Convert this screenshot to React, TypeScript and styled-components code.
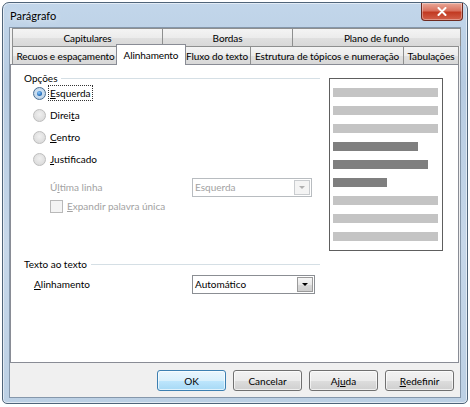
import React from "react";
import styled, { createGlobalStyle } from "styled-components";

const Global = createGlobalStyle`
  html, body { margin: 0; padding: 0; background: #ffffff; }
  body { font-family: Lato, "Open Sans", Arial, sans-serif; font-size: 10px; color: #000; }
  * { box-sizing: border-box; }
`;

const Win = styled.div`
  margin: 2px 0 0 2px;
  width: 466px;
  height: 402px;
  border: 1px solid #4f6479;
  border-radius: 7px 7px 5px 5px;
  background: linear-gradient(180deg, #c2d6ea 0%, #b7cce2 20%, #c6d7e9 60%, #bcd0e4 100%);
  box-shadow: inset 0 0 0 1px rgba(255, 255, 255, 0.55);
  padding: 0 6px 5px 6px;
  display: flex;
  flex-direction: column;
`;

const TitleBar = styled.div`
  height: 24px;
  display: flex;
  align-items: flex-start;
`;

const Title = styled.span`
  margin: 6px 0 0 1px;
  font-size: 11px;
  line-height: 14px;
  color: #000;
  text-shadow: 0 0 6px rgba(255, 255, 255, 0.9);
`;

const CloseBtn = styled.div`
  margin-left: auto;
  margin-right: -2px;
  width: 42px;
  height: 18px;
  border: 1px solid #6f2a20;
  border-top: none;
  border-radius: 0 0 4px 4px;
  background: linear-gradient(180deg, #e9a898 0%, #d9715e 45%, #c23a22 55%, #d2604a 100%);
  box-shadow: inset 0 0 0 1px rgba(255, 255, 255, 0.35);
  display: flex;
  align-items: center;
  justify-content: center;
`;

const Client = styled.div`
  flex: 1;
  background: #f0f0f0;
  border: 1px solid #8597ab;
  display: flex;
  flex-direction: column;
  padding: 0 1px 0 0;
`;

const TabRow = styled.div`
  display: flex;
  height: 18px;
  padding-left: 2px;
  position: relative;
`;

const Tab = styled.div<{ $w: number }>`
  width: ${(p) => p.$w}px;
  flex: none;
  border: 1px solid #8e8f8f;
  border-bottom: none;
  margin-left: -1px;
  background: linear-gradient(180deg, #f4f4f4 0%, #ececec 50%, #e0e0e0 51%, #d8d8d8 100%);
  display: flex;
  align-items: center;
  justify-content: center;
  white-space: nowrap;
  overflow: hidden;
  font-size: 10px;
  letter-spacing: -0.1px;
  line-height: 14px;
  color: #000;
  &:first-child { margin-left: 0; }
`;

const ActiveTab = styled(Tab)`
  background: #ffffff;
  position: relative;
  z-index: 2;
  margin: -2px -2px -1px -3px;
  width: ${(p) => p.$w + 4}px;
  border-color: #898c95;
  padding-bottom: 1px;
`;

const Panel = styled.div`
  height: 299px;
  background: #ffffff;
  border: 1px solid #898c95;
  position: relative;
  z-index: 1;
  padding: 5px 0 0 13px;
`;

const Top = styled.div`
  display: flex;
`;

const Options = styled.div`
  width: 296px;
  display: flex;
  flex-direction: column;
`;

const GroupHead = styled.div`
  display: flex;
  align-items: center;
  height: 16px;
  gap: 4px;
  color: #000;
  &::after {
    content: "";
    flex: 1;
    height: 1px;
    background: #d5dfe5;
    box-shadow: 0 1px 0 #ffffff;
  }
`;

const RadioList = styled.div`
  margin-top: -4px;
  display: flex;
  flex-direction: column;
`;

const RadioRow = styled.div`
  height: 22px;
  display: flex;
  align-items: center;
  padding-left: 9px;
  gap: 3px;
`;

const Radio = styled.span<{ $on?: boolean }>`
  width: 13px;
  height: 13px;
  border-radius: 50%;
  border: 1px solid ${(p) => (p.$on ? "#4a6f93" : "#bdbdbd")};
  background: ${(p) =>
    p.$on
      ? "radial-gradient(circle at 50% 45%, #d8e9f7 0%, #c5d9ec 60%, #a8bdd2 100%)"
      : "radial-gradient(circle at 50% 40%, #f0f0f0 0%, #dddddd 70%, #d2d2d2 100%)"};
  display: flex;
  align-items: center;
  justify-content: center;
  flex: none;
  &::after {
    content: "";
    display: ${(p) => (p.$on ? "block" : "none")};
    width: 5px;
    height: 5px;
    border-radius: 50%;
    background: radial-gradient(circle at 40% 35%, #8ecbff 0%, #2a74c0 60%, #1b4f8a 100%);
  }
`;

const Label = styled.span<{ $focus?: boolean; $disabled?: boolean }>`
  color: ${(p) => (p.$disabled ? "#a2a2a2" : "#000")};
  line-height: 14px;
  padding: 0 1px;
  outline: ${(p) => (p.$focus ? "1px dotted #333" : "none")};
  white-space: nowrap;
`;

const U = styled.span`
  text-decoration: underline;
`;

const FieldRow = styled.div<{ $indent: number; $labelW: number; $top: number }>`
  height: 20px;
  margin-top: ${(p) => p.$top}px;
  display: flex;
  align-items: center;
  padding-left: ${(p) => p.$indent}px;
  & > span:first-child { width: ${(p) => p.$labelW}px; flex: none; }
`;

const Select = styled.div<{ $w: number; $disabled?: boolean }>`
  width: ${(p) => p.$w}px;
  height: 19px;
  border: 1px solid ${(p) => (p.$disabled ? "#b8bcc0" : "#8b8e93")};
  background: #ffffff;
  display: flex;
  align-items: center;
  padding: 1px 1px 1px 2px;
  color: ${(p) => (p.$disabled ? "#a2a2a2" : "#000")};
  line-height: 14px;
`;

const SelectText = styled.span`
  flex: 1;
  white-space: nowrap;
`;

const Arrow = styled.span<{ $disabled?: boolean }>`
  width: 16px;
  height: 15px;
  border: 1px solid ${(p) => (p.$disabled ? "#c9cccf" : "#9a9a9a")};
  background: ${(p) =>
    p.$disabled ? "#f4f4f4" : "linear-gradient(180deg, #f6f6f6 0%, #e8e8e8 50%, #d9d9d9 51%, #cfcfcf 100%)"};
  display: flex;
  align-items: center;
  justify-content: center;
  &::after {
    content: "";
    border-left: 3px solid transparent;
    border-right: 3px solid transparent;
    border-top: 3px solid ${(p) => (p.$disabled ? "#b0b0b0" : "#000")};
  }
`;

const CheckRow = styled.div`
  height: 18px;
  display: flex;
  align-items: center;
  padding-left: 26px;
  gap: 3px;
`;

const Check = styled.span`
  width: 13px;
  height: 13px;
  border: 1px solid #b9b9b9;
  background: #f4f4f4;
  flex: none;
`;

const Preview = styled.div`
  margin: 8px 0 0 9px;
  width: 114px;
  height: 173px;
  border: 1px solid #5e5e5e;
  background: #ffffff;
  padding: 9px 4px 9px 3px;
  display: flex;
  flex-direction: column;
  gap: 9px;
`;

const Bar = styled.div<{ $dark?: boolean }>`
  height: 9px;
  background: ${(p) => (p.$dark ? "#7f7f7f" : "#c4c4c4")};
`;

const Group2 = styled.div`
  width: 296px;
  margin-top: 5px;
  display: flex;
  flex-direction: column;
`;

const Buttons = styled.div`
  display: flex;
  justify-content: flex-end;
  gap: 7px;
  padding: 7px 5px 0 0;
`;

const Button = styled.div<{ $default?: boolean }>`
  width: 69px;
  height: 21px;
  border: 1px solid ${(p) => (p.$default ? "#3c7fb1" : "#707070")};
  border-radius: 3px;
  background: ${(p) =>
    p.$default
      ? "linear-gradient(180deg, #eaf6fd 0%, #d9f0fc 50%, #bee6fd 51%, #a7d9f5 100%)"
      : "linear-gradient(180deg, #f2f2f2 0%, #ebebeb 50%, #dddddd 51%, #cfcfcf 100%)"};
  box-shadow: inset 0 0 0 1px rgba(255, 255, 255, 0.65);
  display: flex;
  align-items: center;
  justify-content: center;
  color: #000;
  line-height: 14px;
`;

const previewBars: Array<{ dark?: boolean; w?: number }> = [
  {}, {}, {},
  { dark: true, w: 85 },
  { dark: true, w: 95 },
  { dark: true, w: 54 },
  {}, {}, {},
];

export default function App() {
  return (
    <>
      <Global />
      <Win>
        <TitleBar>
          <Title>Parágrafo</Title>
          <CloseBtn>
            <svg width="10" height="9" viewBox="0 0 10 9">
              <path d="M1.5 1 L8.5 8 M8.5 1 L1.5 8" stroke="#ffffff" strokeWidth="2" strokeLinecap="round" />
            </svg>
          </CloseBtn>
        </TitleBar>
        <Client>
          <TabRow>
            <Tab $w={151}>Capitulares</Tab>
            <Tab $w={131}>Bordas</Tab>
            <Tab $w={169}>Plano de fundo</Tab>
          </TabRow>
          <TabRow>
            <Tab $w={107}>Recuos e espaçamento</Tab>
            <ActiveTab $w={66}>Alinhamento</ActiveTab>
            <Tab $w={68}>Fluxo do texto</Tab>
            <Tab $w={154}>Estrutura de tópicos e numeração</Tab>
            <Tab $w={56}>Tabulações</Tab>
          </TabRow>
          <Panel>
            <Top>
              <Options>
                <GroupHead>Opções</GroupHead>
                <RadioList>
                  <RadioRow>
                    <Radio $on />
                    <Label $focus><U>E</U>squerda</Label>
                  </RadioRow>
                  <RadioRow>
                    <Radio />
                    <Label>Direi<U>t</U>a</Label>
                  </RadioRow>
                  <RadioRow>
                    <Radio />
                    <Label><U>C</U>entro</Label>
                  </RadioRow>
                  <RadioRow>
                    <Radio />
                    <Label><U>J</U>ustificado</Label>
                  </RadioRow>
                </RadioList>
                <FieldRow $indent={25} $labelW={143} $top={7}>
                  <Label $disabled>Ú<U>l</U>tima linha</Label>
                  <Select $w={120} $disabled>
                    <SelectText>Esquerda</SelectText>
                    <Arrow $disabled />
                  </Select>
                </FieldRow>
                <CheckRow>
                  <Check />
                  <Label $disabled><U>E</U>xpandir palavra única</Label>
                </CheckRow>
              </Options>
              <Preview>
                {previewBars.map((b, i) => (
                  <Bar key={i} $dark={b.dark} style={b.w ? { width: b.w } : undefined} />
                ))}
              </Preview>
            </Top>
            <Group2>
              <GroupHead>Texto ao texto</GroupHead>
              <FieldRow $indent={9} $labelW={159} $top={2}>
                <Label><U>A</U>linhamento</Label>
                <Select $w={123}>
                  <SelectText>Automático</SelectText>
                  <Arrow />
                </Select>
              </FieldRow>
            </Group2>
          </Panel>
          <Buttons>
            <Button $default>OK</Button>
            <Button>Cancelar</Button>
            <Button>Aj<U>u</U>da</Button>
            <Button><U>R</U>edefinir</Button>
          </Buttons>
        </Client>
      </Win>
    </>
  );
}
